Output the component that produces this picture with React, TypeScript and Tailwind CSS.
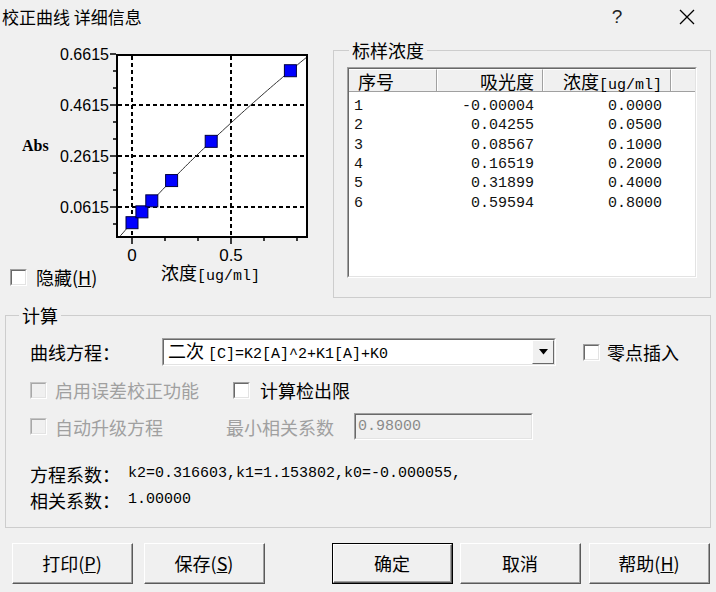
import React from "react";

const CJK = "font-['Noto_Sans_CJK_SC',sans-serif]";
const MONO = "font-['Liberation_Mono','Noto_Sans_CJK_SC',monospace]";

// [C] = K2[A]^2 + K1[A] + K0
const K2 = 0.316603;
const K1 = 1.153802;
const K0 = -0.000055;

const samples = [
  { no: "1", abs: "-0.00004", conc: "0.0000", a: -0.00004, c: 0 },
  { no: "2", abs: "0.04255", conc: "0.0500", a: 0.04255, c: 0.05 },
  { no: "3", abs: "0.08567", conc: "0.1000", a: 0.08567, c: 0.1 },
  { no: "4", abs: "0.16519", conc: "0.2000", a: 0.16519, c: 0.2 },
  { no: "5", abs: "0.31899", conc: "0.4000", a: 0.31899, c: 0.4 },
  { no: "6", abs: "0.59594", conc: "0.8000", a: 0.59594, c: 0.8 },
];

const px = (c: number) => 132 + c * 198;
const py = (a: number) => 207 - (a - 0.0615) * 255;

function Chart() {
  const curve: string[] = [];
  for (let a = -0.06; a <= 0.68; a += 0.01) {
    const c = K2 * a * a + K1 * a + K0;
    curve.push(`${px(c).toFixed(1)},${py(a).toFixed(1)}`);
  }
  const yMajor = [
    { y: 54, t: "0.6615" },
    { y: 105, t: "0.4615" },
    { y: 156, t: "0.2615" },
    { y: 207, t: "0.0615" },
  ];
  const yMinor = [71, 88, 122, 139, 173, 190, 224];
  const xMinor = [165, 198, 264, 297];

  return (
    <svg width={333} height={232} viewBox="0 34 333 232" className="block">
      <defs>
        <clipPath id="plot">
          <rect x={117} y={55} width={190} height={182} />
        </clipPath>
      </defs>
      <rect x={117} y={55} width={190} height={182} fill="#fff" />

      {/* grid */}
      {[132, 231].map((x) => (
        <line key={x} x1={x} y1={56} x2={x} y2={236} stroke="#000" strokeWidth={2} strokeDasharray="4 3" />
      ))}
      {[105, 156, 207].map((y) => (
        <line key={y} x1={118} y1={y} x2={306} y2={y} stroke="#000" strokeWidth={2} strokeDasharray="4 3" />
      ))}

      {/* fit curve */}
      <polyline points={curve.join(" ")} fill="none" stroke="#333" strokeWidth={1} clipPath="url(#plot)" />

      {samples.map((s) => (
        <rect
          key={s.no}
          x={px(s.c) - 6}
          y={py(s.a) - 6}
          width={12}
          height={12}
          fill="#0000ff"
          stroke="#000040"
          strokeWidth={1}
        />
      ))}

      <rect x={117} y={55} width={190} height={182} fill="none" stroke="#000" strokeWidth={2} />

      {/* ticks */}
      {yMajor.map((m) => (
        <line key={m.y} x1={110} y1={m.y} x2={116} y2={m.y} stroke="#000" strokeWidth={1.5} />
      ))}
      {yMinor.map((y) => (
        <line key={y} x1={113} y1={y} x2={116} y2={y} stroke="#000" strokeWidth={1.5} />
      ))}
      {[132, 231].map((x) => (
        <line key={x} x1={x} y1={238} x2={x} y2={244} stroke="#000" strokeWidth={1.5} />
      ))}
      {xMinor.map((x) => (
        <line key={x} x1={x} y1={238} x2={x} y2={241} stroke="#000" strokeWidth={1.5} />
      ))}

      {/* labels */}
      {yMajor.map((m) => (
        <text
          key={m.t}
          x={109}
          y={m.y + 6}
          textAnchor="end"
          fontSize={17}
          fontFamily="Liberation Sans, sans-serif"
          textLength={49}
          lengthAdjust="spacingAndGlyphs"
          fill="#000"
        >
          {m.t}
        </text>
      ))}
      <text x={132} y={261} textAnchor="middle" fontSize={17} fontFamily="Liberation Sans, sans-serif" fill="#000">
        0
      </text>
      <text x={231} y={261} textAnchor="middle" fontSize={17} fontFamily="Liberation Sans, sans-serif" fill="#000">
        0.5
      </text>
      <text x={22} y={151} fontSize={16} fontWeight={700} fontFamily="Liberation Serif, serif" fill="#000">
        Abs
      </text>
    </svg>
  );
}

function Check({ disabled = false }: { disabled?: boolean }) {
  return (
    <div
      className={`w-[17px] h-[17px] shrink-0 border ${
        disabled
          ? "border-t-[#c4c4c4] border-l-[#c4c4c4] border-r-white border-b-white"
          : "border-t-[#a0a0a0] border-l-[#a0a0a0] border-r-white border-b-white"
      }`}
    >
      <div
        className={`w-full h-full border ${
          disabled
            ? "border-t-[#a8a8a8] border-l-[#a8a8a8] border-r-[#e3e3e3] border-b-[#e3e3e3] bg-[#f0f0f0]"
            : "border-t-[#696969] border-l-[#696969] border-r-[#e3e3e3] border-b-[#e3e3e3] bg-white"
        }`}
      />
    </div>
  );
}

function Sunken({ className, children }: { className: string; children?: React.ReactNode }) {
  return (
    <div className={`border border-t-[#a0a0a0] border-l-[#a0a0a0] border-r-white border-b-white ${className}`}>
      <div className="w-full h-full border border-t-[#696969] border-l-[#696969] border-r-[#e3e3e3] border-b-[#e3e3e3]">
        {children}
      </div>
    </div>
  );
}

function Btn({ children, def = false, className = "" }: { children: React.ReactNode; def?: boolean; className?: string }) {
  return (
    <div className={`h-[41px] w-[121px] shrink-0 ${def ? "border border-black" : ""} ${className}`}>
      <div className="h-full border border-t-white border-l-white border-r-[#5a5a5a] border-b-[#5a5a5a]">
        <div className="h-full flex items-center justify-center border-r border-b border-r-[#a0a0a0] border-b-[#a0a0a0] bg-[#f0f0f0] text-[18px] leading-[24px]">
          {children}
        </div>
      </div>
    </div>
  );
}

export default function App() {
  return (
    <div className={`w-[716px] h-[592px] overflow-hidden bg-[#f0f0f0] text-black ${CJK}`}>
      {/* title bar */}
      <div className="h-[34px] flex items-center">
        <div className="pl-[2px] text-[17px] leading-[24px]">校正曲线 详细信息</div>
        <div className="flex-1" />
        <div className="w-[20px] text-center text-[19px] leading-[24px] font-['Liberation_Sans',sans-serif] text-[#222]">?</div>
        <svg width={16} height={16} viewBox="0 0 16 16" className="ml-[52px] mr-[21px]">
          <path d="M1 1 L15 15 M15 1 L1 15" stroke="#000" strokeWidth={1.3} fill="none" />
        </svg>
      </div>

      {/* chart + sample list */}
      <div className="h-[266px] flex">
        <div className="w-[333px] shrink-0 flex flex-col">
          <Chart />
          <div className="flex items-start h-[22px]">
            <div className="w-[161px] pl-[10px] mt-[3px] flex items-center">
              <Check />
              <span className="ml-[9px] text-[18px] leading-[17px]">
                隐藏(<span className="underline">H</span>)
              </span>
            </div>
            <div className="mt-[-4px] leading-[20px] whitespace-nowrap">
              <span className="text-[18px]">浓度</span>
              <span className={`${MONO} text-[15px]`}>[ug/ml]</span>
            </div>
          </div>
        </div>

        <div className="relative mt-[16px] w-[378px] h-[248px] border border-[#cdcdcd] pl-[13px] pt-[16px]">
          <span className="absolute left-[15px] top-[-13px] px-[3px] bg-[#f0f0f0] text-[18px] leading-[24px]">标样浓度</span>
          <Sunken className="w-[350px] h-[211px]">
            <div className="w-full h-full bg-white">
              <div className="flex h-[23px] bg-[#f0f0f0] border-b border-b-[#a0a0a0] text-[18px] leading-[23px]">
                <div className="w-[88px] pl-[9px] border-r border-r-[#a0a0a0] border-t border-t-white">序号</div>
                <div className="w-[106px] pr-[8px] text-right border-r border-r-[#a0a0a0] border-t border-t-white border-l border-l-white">吸光度</div>
                <div className="w-[128px] pr-[8px] text-right border-r border-r-[#a0a0a0] border-t border-t-white border-l border-l-white whitespace-nowrap">
                  浓度<span className={`${MONO} text-[15px]`}>[ug/ml]</span>
                </div>
                <div className="flex-1 border-t border-t-white border-l border-l-white" />
              </div>
              <div className={`pt-[5px] ${MONO} text-[15px] text-[#111]`}>
                {samples.map((s) => (
                  <div key={s.no} className="flex h-[19.33px] leading-[19.33px]">
                    <div className="w-[88px] pl-[5px]">{s.no}</div>
                    <div className="w-[106px] pr-[9px] text-right">{s.abs}</div>
                    <div className="w-[128px] pr-[9px] text-right">{s.conc}</div>
                  </div>
                ))}
              </div>
            </div>
          </Sunken>
        </div>
      </div>

      {/* calc group */}
      <div className="relative mt-[15px] ml-[5px] w-[706px] h-[213px] border border-[#cdcdcd] pl-[24px] text-[18px]">
        <span className="absolute left-[13px] top-[-13px] px-[3px] bg-[#f0f0f0] leading-[24px]">计算</span>

        <div className="mt-[22px] h-[28px] flex items-center">
          <div className="w-[132px] leading-[24px]">曲线方程：</div>
          <Sunken className="w-[394px] h-full">
            <div className="w-full h-full bg-white flex items-center">
              <div className="flex-1 pl-[4px] whitespace-nowrap leading-[22px]">
                二次 <span className={`${MONO} text-[15px]`}>[C]=K2[A]^2+K1[A]+K0</span>
              </div>
              <div className="w-[22px] h-full border border-t-white border-l-white border-r-[#696969] border-b-[#696969] bg-[#f0f0f0] flex items-center justify-center">
                <svg width={9} height={6} viewBox="0 0 9 6">
                  <polygon points="0,0 9,0 4.5,5.5" fill="#000" />
                </svg>
              </div>
            </div>
          </Sunken>
          <div className="ml-[27px]">
            <Check />
          </div>
          <span className="ml-[7px] leading-[24px]">零点插入</span>
        </div>

        <div className="mt-[12px] h-[24px] flex items-center">
          <Check disabled />
          <span className="ml-[8px] text-[#a0a0a0] leading-[24px]">启用误差校正功能</span>
          <div className="ml-[34px]">
            <Check />
          </div>
          <span className="ml-[10px] leading-[24px]">计算检出限</span>
        </div>

        <div className="mt-[11px] h-[27px] flex items-center">
          <Check disabled />
          <span className="ml-[8px] text-[#a0a0a0] leading-[24px]">自动升级方程</span>
          <span className="ml-[63px] text-[#a0a0a0] leading-[24px]">最小相关系数</span>
          <Sunken className="ml-[20px] w-[179px] h-full">
            <div className={`w-full h-full bg-[#f0f0f0] pl-[2px] ${MONO} text-[15px] leading-[23px] text-[#8a8a8a]`}>0.98000</div>
          </Sunken>
        </div>

        <div className="mt-[21px] h-[26px] flex items-center whitespace-nowrap">
          <span className="w-[98px] leading-[24px]">方程系数：</span>
          <span className={`${MONO} text-[15px]`}>k2=0.316603,k1=1.153802,k0=-0.000055,</span>
        </div>
        <div className="h-[26px] flex items-center whitespace-nowrap">
          <span className="w-[98px] leading-[24px]">相关系数：</span>
          <span className={`${MONO} text-[15px]`}>1.00000</span>
        </div>
      </div>

      {/* buttons */}
      <div className="mt-[15px] flex">
        <Btn className="ml-[12px]">
          打印(<span className="underline">P</span>)
        </Btn>
        <Btn className="ml-[11px]">
          保存(<span className="underline">S</span>)
        </Btn>
        <Btn def className="ml-[67px]">
          确定
        </Btn>
        <Btn className="ml-[7px]">取消</Btn>
        <Btn className="ml-[8px]">
          帮助(<span className="underline">H</span>)
        </Btn>
      </div>
    </div>
  );
}
